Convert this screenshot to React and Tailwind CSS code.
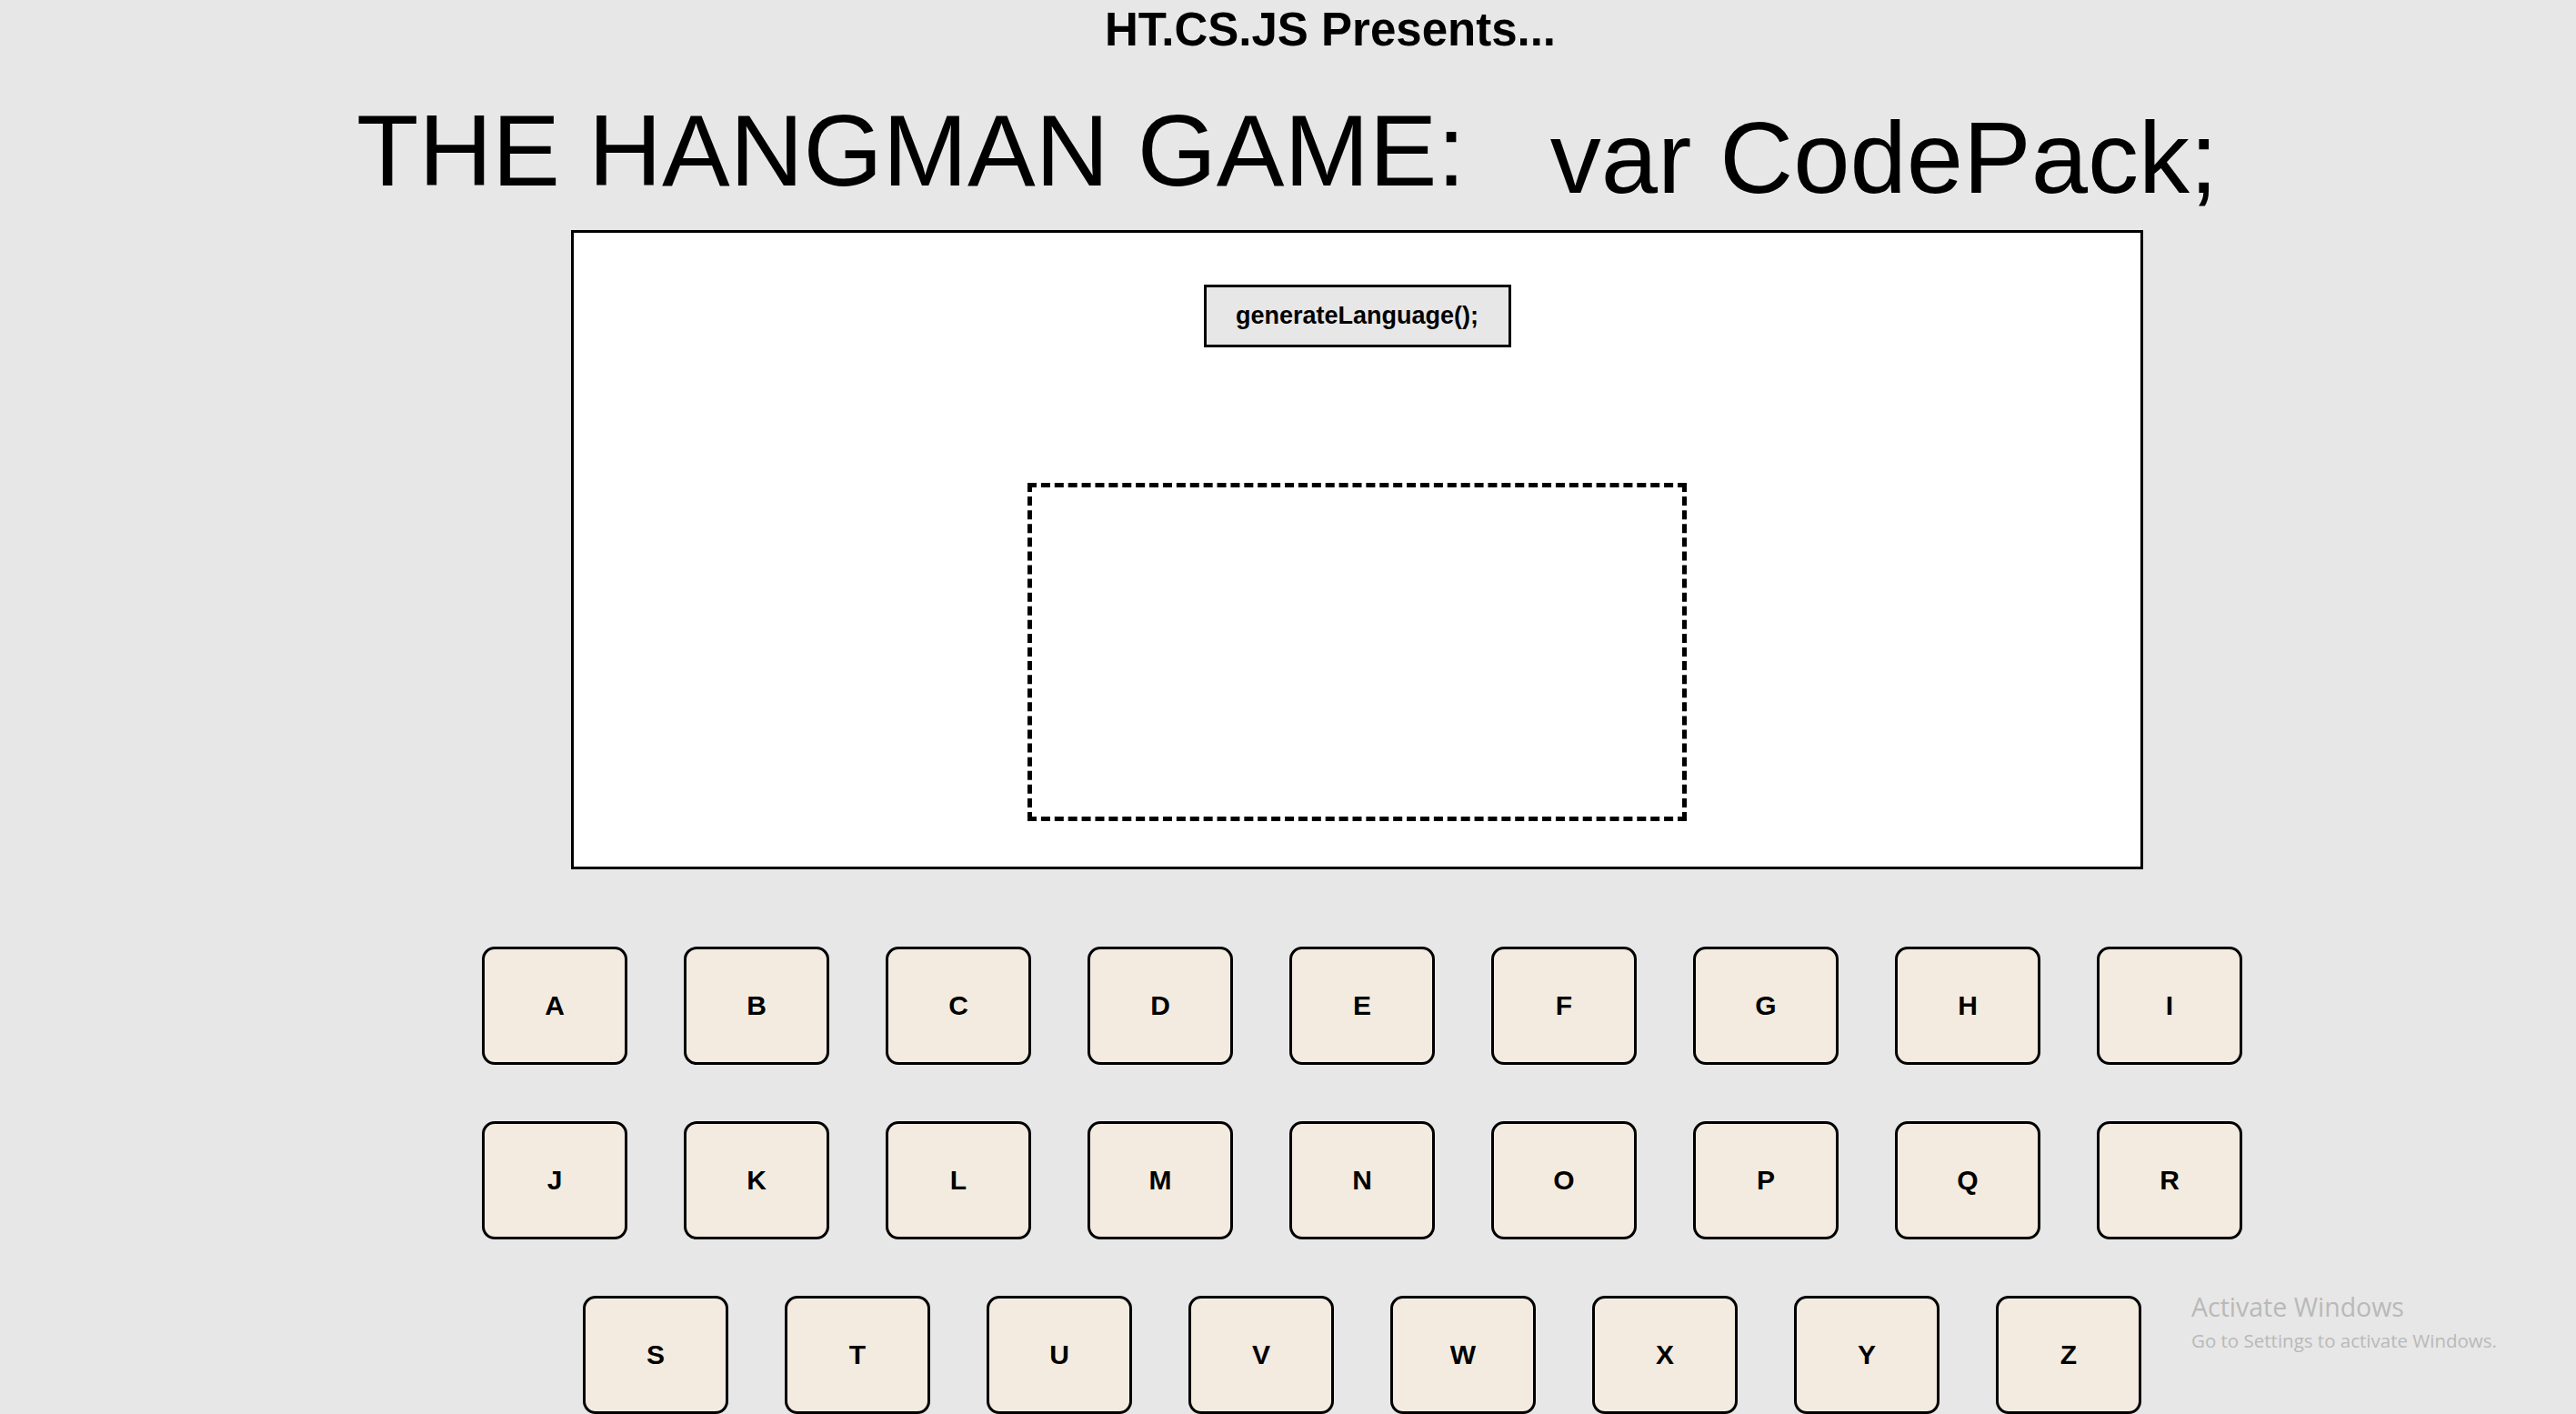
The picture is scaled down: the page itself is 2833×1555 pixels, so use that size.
import React from "react";

const rows = [
  ["A", "B", "C", "D", "E", "F", "G", "H", "I"],
  ["J", "K", "L", "M", "N", "O", "P", "Q", "R"],
  ["S", "T", "U", "V", "W", "X", "Y", "Z"],
];

function Key({ letter }) {
  return (
    <button className="w-[160px] h-[130px] shrink-0 rounded-[14px] border-[3px] border-black bg-[#f3ebdf] flex items-center justify-center text-[30px] font-bold leading-none text-black">
      {letter}
    </button>
  );
}

export default function App() {
  return (
    <div
      className="relative w-full h-[1555px] overflow-hidden bg-[#e7e7e7] text-black"
      style={{ fontFamily: '"Liberation Sans", Arial, sans-serif' }}
    >
      <div className="flex justify-center pl-[93px] pt-[7px]">
        <div className="text-[51px] leading-[51px] font-bold">HT.CS.JS Presents...</div>
      </div>

      <div className="flex items-start pl-[392px] mt-[52px]">
        <h1 className="text-[112px] leading-none font-normal whitespace-nowrap">THE HANGMAN GAME:</h1>
        <div className="ml-[93px] mt-[8px] text-[112px] leading-none whitespace-nowrap">var CodePack;</div>
      </div>

      <div className="ml-[628px] mt-[23px] w-[1729px] h-[703px] border-[3px] border-black bg-white flex flex-col items-center pt-[57px]">
        <button className="w-[338px] h-[69px] border-[3px] border-black bg-[#e7e7e7] text-[27px] font-bold leading-none flex items-center justify-center">
          generateLanguage();
        </button>
        <div className="mt-[149px] w-[725px] h-[372px] border-[5px] border-dashed border-black"></div>
      </div>

      <div className="ml-[530px] mt-[85px] w-[1936px] flex flex-col gap-[62px]">
        {rows.map((row, i) => (
          <div key={i} className="flex justify-center gap-[62px]">
            {row.map((l) => (
              <Key key={l} letter={l} />
            ))}
          </div>
        ))}
      </div>

      <div
        className="absolute left-[2410px] top-[1423px] text-[#b9b9b9] pointer-events-none"
        style={{ fontFamily: '"Open Sans", "Noto Sans", sans-serif' }}
      >
        <div className="text-[28.5px] leading-none">Activate Windows</div>
        <div className="mt-[12px] text-[20.5px] leading-none">Go to Settings to activate Windows.</div>
      </div>
    </div>
  );
}
